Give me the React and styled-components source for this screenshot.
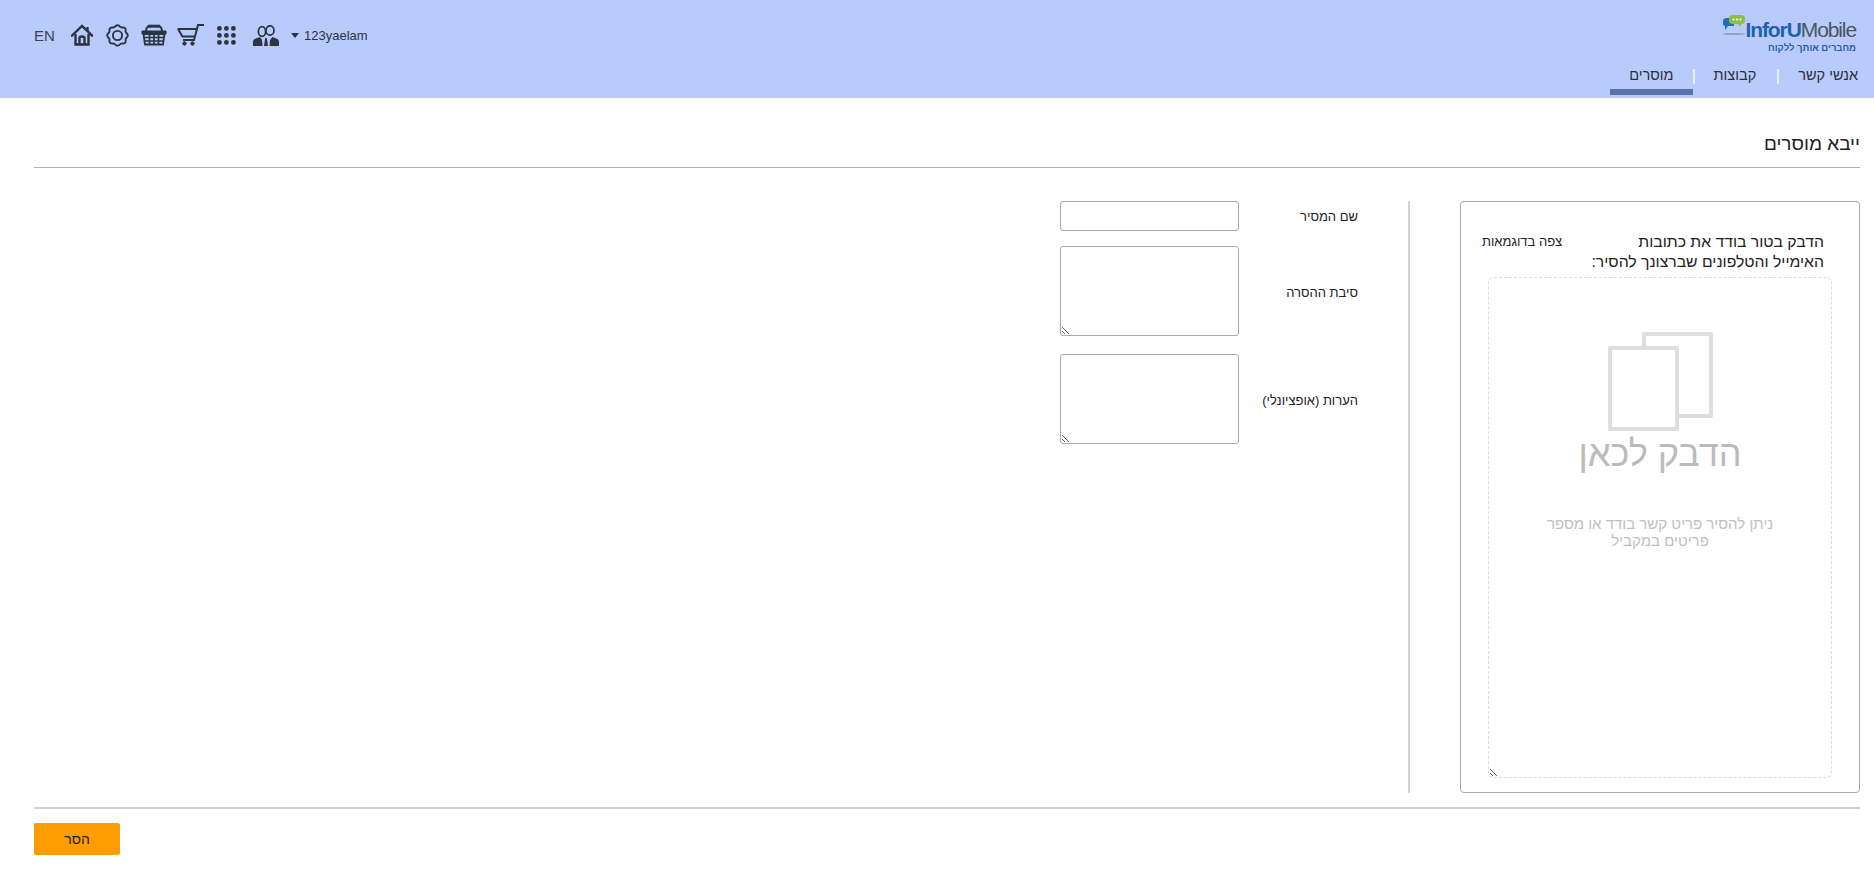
import React from 'react'
import styled, { createGlobalStyle } from 'styled-components'

const GlobalStyle = createGlobalStyle`
    html, body {
        margin: 0;
        padding: 0;
        background: #fff;
        font-family: "Liberation Sans", Arial, sans-serif;
        color: #222;
    }
    * {
        box-sizing: border-box;
    }
`

function HomeIcon() {
    return (
        <svg width="22" height="22" viewBox="0 0 22 22" fill="none" stroke="#2b3440" strokeWidth="2.4">
            <path d="M1 11.5 L11 2 L21 11.5" strokeLinecap="square" />
            <path d="M4.5 10 V20.5 H17.5 V10" />
            <path d="M8.5 20.5 V14 Q8.5 12.5 11 12.5 Q13.5 12.5 13.5 14 V20.5" />
            <path d="M16.5 3 V7" />
        </svg>
    )
}

function GearIcon() {
    return (
        <svg width="23" height="23" viewBox="0 0 23 23" fill="none" stroke="#2b3440" strokeWidth="1.9">
            <path d="M8.6 3 Q11.5 -0.6 14.4 3 Q15.4 3.8 16.8 3.4 Q20 3.4 19.6 6.2 Q19.2 7.6 20 8.6 Q23.6 11.5 20 14.4 Q19.2 15.4 19.6 16.8 Q20 19.6 16.8 19.6 Q15.4 19.2 14.4 20 Q11.5 23.6 8.6 20 Q7.6 19.2 6.2 19.6 Q3.4 19.6 3.4 16.8 Q3.8 15.4 3 14.4 Q-0.6 11.5 3 8.6 Q3.8 7.6 3.4 6.2 Q3.4 3.4 6.2 3.4 Q7.6 3.8 8.6 3 Z" />
            <circle cx="11.5" cy="11.5" r="4.6" />
        </svg>
    )
}

function BasketIcon() {
    return (
        <svg width="26" height="22" viewBox="0 0 26 22" fill="none" stroke="#2b3440">
            <path d="M5 8 Q5 2 9 2 H17 Q21 2 21 8" strokeWidth="2" />
            <path d="M7 2.2 H19" strokeWidth="3" />
            <path d="M1 7 H25 V10 H1 Z" fill="#2b3440" strokeWidth="1" />
            <path d="M2.5 10 L4 20.5 H22 L23.5 10 Z" strokeWidth="1.8" />
            <path d="M3 13.5 H23 M3.5 17 H22.5 M8.5 10 V20.5 M13 10 V20.5 M17.5 10 V20.5" strokeWidth="1.7" />
        </svg>
    )
}

function CartIcon() {
    return (
        <svg width="27" height="22" viewBox="0 0 27 22" fill="none" stroke="#2b3440" strokeWidth="2">
            <path d="M27 1 H21 L17 16 H6" />
            <path d="M0.5 5 H19.5 M1 5 L5.5 12.5 H17.8" />
            <circle cx="7.5" cy="19.5" r="1.7" fill="#2b3440" strokeWidth="1" />
            <circle cx="15.5" cy="19.5" r="1.7" fill="#2b3440" strokeWidth="1" />
        </svg>
    )
}

function GridIcon() {
    const dots = []
    for (let row = 0; row < 3; row++) {
        for (let col = 0; col < 3; col++) {
            dots.push(<circle key={row + '-' + col} cx={2.4 + col * 7} cy={2.4 + row * 7} r="2.4" />)
        }
    }
    return (
        <svg width="19" height="19" viewBox="0 0 19 19" fill="#2b3440">
            {dots}
        </svg>
    )
}

function UsersIcon() {
    return (
        <svg width="26" height="21" viewBox="0 0 26 21">
            <path d="M0 21 V17 Q0 14 4 13 L7 12 L9 15 L9.5 21 Z M26 21 V17 Q26 14 22 13 L19.5 12 L17 15 L16.5 21 Z M11 21 L12.2 13 H13.8 L15 21 Z" fill="#2b3440" />
            <ellipse cx="9" cy="6.5" rx="3.6" ry="4.8" fill="none" stroke="#2b3440" strokeWidth="1.7" />
            <ellipse cx="17" cy="5.5" rx="4" ry="4.7" fill="none" stroke="#2b3440" strokeWidth="1.7" />
        </svg>
    )
}

function BubblesIcon() {
    return (
        <svg width="24" height="20" viewBox="0 0 24 20">
            <ellipse cx="12" cy="19" rx="11" ry="1" fill="#8fa0bd" />
            <path d="M1 6 Q1 3 5 3 H12 V11 H6 L3 15 V11 Q1 11 1 9 Z" fill="#2470b5" />
            <path d="M7 3 Q7 0 11 0 H19 Q23 0 23 3.5 V6 Q23 9 19 9 V12 L15.5 9 H11 Q7 9 7 6 Z" fill="#8cc04a" />
            <circle cx="11.5" cy="4.5" r="1" fill="#fff" />
            <circle cx="15" cy="4.5" r="1" fill="#fff" />
            <circle cx="18.5" cy="4.5" r="1" fill="#fff" />
        </svg>
    )
}

function PasteIcon() {
    return (
        <svg width="105" height="99" viewBox="0 0 105 99" fill="none" stroke="#dedede" strokeWidth="4" strokeLinejoin="round">
            <path d="M36 15 V2 H103 V84 H71" />
            <rect x="2" y="16" width="67" height="81" fill="#fff" />
        </svg>
    )
}

export default function App() {
    return (
        <Wrapper dir="rtl">
            <GlobalStyle />
            <Header>
                <Brand>
                    <Logo dir="ltr">
                        <LogoRow>
                            <BubblesIcon />
                            <LogoName>InforU<span>Mobile</span></LogoName>
                        </LogoRow>
                        <LogoTag dir="rtl">מחברים אותך ללקוח</LogoTag>
                    </Logo>
                    <Tabs>
                        <Tab $pad="0 0 0 21px">אנשי קשר</Tab>
                        <Tab $pad="0 21px">קבוצות</Tab>
                        <Tab $pad="0 19px" $active>מוסרים</Tab>
                    </Tabs>
                </Brand>
                <Toolbar dir="ltr">
                    <Lang>EN</Lang>
                    <ToolSlot $gap={12}><HomeIcon /></ToolSlot>
                    <ToolSlot $gap={13}><GearIcon /></ToolSlot>
                    <ToolSlot $gap={12}><BasketIcon /></ToolSlot>
                    <ToolSlot $gap={10}><CartIcon /></ToolSlot>
                    <ToolSlot $gap={13}><GridIcon /></ToolSlot>
                    <ToolSlot $gap={17}><UsersIcon /></ToolSlot>
                    <UserName>
                        <Caret />
                        123yaelam
                    </UserName>
                </Toolbar>
            </Header>
            <Main>
                <Title>ייבא מוסרים</Title>
                <Work>
                    <Card>
                        <CardHead>
                            <CardText>
                                הדבק בטור בודד את כתובות
                                <br />
                                האימייל והטלפונים שברצונך להסיר:
                            </CardText>
                            <Examples>צפה בדוגמאות</Examples>
                        </CardHead>
                        <DropZone>
                            <ZoneInput />
                            <ZoneHint>
                                <PasteIcon />
                                <HintTitle>הדבק לכאן</HintTitle>
                                <HintText>
                                    ניתן להסיר פריט קשר בודד או מספר
                                    <br />
                                    פריטים במקביל
                                </HintText>
                            </ZoneHint>
                        </DropZone>
                    </Card>
                    <Form>
                        <Label>שם המסיר</Label>
                        <TextInput type="text" />
                        <Label>סיבת ההסרה</Label>
                        <TextArea />
                        <Label>הערות (אופציונלי)</Label>
                        <TextArea />
                    </Form>
                </Work>
                <Footer dir="ltr">
                    <Button>הסר</Button>
                </Footer>
            </Main>
        </Wrapper>
    )
}

const Wrapper = styled.div`
    width: 100%;
    min-height: 882px;
    background: #fff;
`

const Header = styled.header`
    height: 98px;
    background: #b8cbfb;
    display: flex;
    justify-content: space-between;
    padding: 0 16px 0 34px;
`

const Brand = styled.div`
    display: flex;
    flex-direction: column;
    align-items: flex-start;
`

const Logo = styled.div`
    height: 59px;
    width: 100%;
    padding: 15px 2px 0 0;
    display: flex;
    flex-direction: column;
    align-items: flex-end;
`

const LogoRow = styled.div`
    display: flex;
    align-items: flex-start;
`

const LogoName = styled.div`
    font-size: 21px;
    line-height: 24px;
    padding-top: 3px;
    font-weight: bold;
    letter-spacing: -1.1px;
    color: #1f62ac;

    span {
        font-weight: normal;
        color: #4c5560;
    }
`

const LogoTag = styled.div`
    font-size: 9.5px;
    line-height: 11px;
    font-weight: bold;
    color: #2a5fa8;
`

const Tabs = styled.nav`
    display: flex;
`

const Tab = styled.div`
    position: relative;
    height: 36px;
    padding: ${p => p.$pad};
    padding-top: 8px;
    font-size: 14.5px;
    line-height: 17px;
    color: #2a2f38;
    border-bottom: 6px solid ${p => (p.$active ? '#5a72ac' : 'transparent')};

    &::after {
        content: ${p => (p.$active ? 'none' : '""')};
        position: absolute;
        left: 0;
        top: 10px;
        height: 15px;
        width: 2px;
        background: #e8eefd;
    }
`

const Toolbar = styled.div`
    display: flex;
    align-items: center;
    height: 70px;
`

const ToolSlot = styled.span`
    display: flex;
    margin-left: ${p => p.$gap}px;
`

const Lang = styled.span`
    font-size: 15px;
    color: #3c4450;
    width: 25px;
`

const UserName = styled.span`
    display: flex;
    align-items: center;
    gap: 5px;
    margin-left: 12px;
    font-size: 13px;
    color: #2b3440;
`

const Caret = styled.i`
    width: 0;
    height: 0;
    border-left: 4.5px solid transparent;
    border-right: 4.5px solid transparent;
    border-top: 5px solid #2b3440;
`

const Main = styled.main`
    padding: 0 14px 0 34px;
`

const Title = styled.h1`
    margin: 0;
    height: 70px;
    padding: 34px 0 0;
    font-size: 19px;
    line-height: 24px;
    font-weight: normal;
    color: #222;
    border-bottom: 1px solid #b0b0b0;
`

const Work = styled.div`
    display: flex;
    margin-top: 33px;
    height: 592px;
`

const Card = styled.section`
    width: 400px;
    height: 100%;
    border: 1px solid #aaa;
    border-radius: 4px;
    padding: 30px 27px 14px 27px;
    display: flex;
    flex-direction: column;
`

const CardHead = styled.div`
    display: flex;
    justify-content: space-between;
    align-items: flex-start;
    padding-right: 8px;
    margin-left: -6px;
    height: 45px;
`

const CardText = styled.div`
    font-size: 15.75px;
    line-height: 20px;
    color: #222;
`

const Examples = styled.span`
    font-size: 13px;
    line-height: 18px;
    margin-top: 1px;
    color: #222;
`

const DropZone = styled.div`
    position: relative;
    flex: 1;
`

const ZoneInput = styled.textarea`
    display: block;
    width: 100%;
    height: 100%;
    border: 1px dashed #dadada;
    border-radius: 6px;
    background: transparent;
    outline: none;
`

const ZoneHint = styled.div`
    position: absolute;
    top: 55px;
    left: 0;
    right: 0;
    display: flex;
    flex-direction: column;
    align-items: center;
    pointer-events: none;
`

const HintTitle = styled.div`
    font-size: 36px;
    line-height: 46px;
    color: #bbb;
`

const HintText = styled.div`
    margin-top: 38px;
    font-size: 15px;
    line-height: 17px;
    text-align: center;
    color: #bfbfbf;
`

const Form = styled.div`
    margin-right: 50px;
    border-right: 2px solid #d2d2d2;
    padding-right: 50px;
    height: 100%;
    display: grid;
    grid-template-columns: 119px 180px;
    grid-auto-rows: min-content;
    row-gap: 15px;
    align-items: center;
    font-size: 13px;
`

const Label = styled.label`
    color: #222;
`

const fieldBorder = `
    border: 1px solid #aaa;
    border-radius: 3px;
    background: #fff;
    outline: none;
    width: 179px;
`

const TextInput = styled.input`
    ${fieldBorder}
    height: 30px;
    display: block;
`

const TextArea = styled.textarea`
    ${fieldBorder}
    height: 90px;
    display: block;
    margin-bottom: 3px;
`

const Footer = styled.div`
    margin-top: 14px;
    border-top: 2px solid #d0d0d0;
    padding-top: 14px;
`

const Button = styled.button`
    width: 86px;
    height: 32px;
    border: none;
    border-radius: 2px;
    background: #ff9c00;
    color: #222;
    font-family: inherit;
    font-size: 14px;
`
